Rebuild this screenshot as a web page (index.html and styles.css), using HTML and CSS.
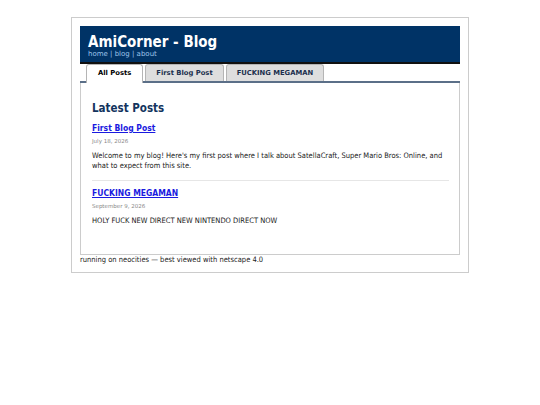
FILE: index.html
```html
<!DOCTYPE html>
<html>
<head>
<meta charset="utf-8">
<title>AmiCorner - Blog</title>
<link rel="stylesheet" href="styles.css">
</head>
<body>
<div class="page">
  <div class="header">
    <h1 class="title">AmiCorner - Blog</h1>
    <div class="nav"><a href="#">home</a> | <a href="#">blog</a> | <a href="#">about</a></div>
  </div>
  <div class="tabs">
    <div class="tab active">All Posts</div>
    <div class="tab">First Blog Post</div>
    <div class="tab">FUCKING MEGAMAN</div>
  </div>
  <div class="panel">
    <h2 class="heading">Latest Posts</h2>
    <div class="post">
      <div class="post-head"><a class="post-title" href="#">First Blog Post</a></div>
      <div class="date">July 18, 2026</div>
      <p class="text">Welcome to my blog! Here's my first post where I talk about SatellaCraft, Super Mario Bros: Online, and what to expect from this site.</p>
    </div>
    <div class="post last">
      <div class="post-head"><a class="post-title" href="#">FUCKING MEGAMAN</a></div>
      <div class="date">September 9, 2026</div>
      <p class="text">HOLY FUCK NEW DIRECT NEW NINTENDO DIRECT NOW</p>
    </div>
  </div>
  <div class="footer">running on neocities — best viewed with netscape 4.0</div>
</div>
</body>
</html>
```

FILE: styles.css
```css
body {
  margin: 17px 0 0;
  background: #fff;
  font-family: "DejaVu Sans", Verdana, sans-serif;
  color: #222;
}
.page {
  width: 380px;
  margin: 0 auto;
  padding: 8px;
  border: 1px solid #ccc;
  background: #fff;
}
.header {
  background: #003366;
  padding: 8px 8px 3px;
  border-bottom: 2px solid #111;
}
.title {
  margin: 0;
  font-family: "DejaVu Sans Condensed", "DejaVu Sans", sans-serif;
  font-size: 15px;
  line-height: 16px;
  color: #fff;
  font-weight: bold;
}
.nav {
  font-size: 7px;
  line-height: 9px;
  color: #9cc3ea;
}
.nav a {
  color: #9cc3ea;
  text-decoration: none;
}
.tabs {
  display: flex;
  gap: 2px;
  padding: 0 0 0 6px;
  border-bottom: 2px solid #5b6f88;
}
.tab {
  font-size: 6.8px;
  font-weight: bold;
  line-height: 9px;
  padding: 4px 10px 3px;
  border: 1px solid #b5b5b5;
  border-bottom: none;
  border-radius: 3px 3px 0 0;
  background: #dedede;
  color: #1b2f4d;
}
.tab.active {
  background: #fff;
  color: #000;
  margin-bottom: -2px;
  padding: 4px 11px 5px;
}
.panel {
  box-sizing: border-box;
  height: 172px;
  border: 1px solid #ccc;
  border-top: none;
  padding: 18px 10px 0 11px;
}
.heading {
  margin: 0 0 7px;
  font-family: "DejaVu Sans Condensed", "DejaVu Sans", sans-serif;
  font-size: 11.5px;
  line-height: 14px;
  color: #13345e;
}
.post {
  padding-bottom: 10px;
  border-bottom: 1px solid #e6e6e6;
  margin-bottom: 6px;
}
.post.last {
  border-bottom: none;
}
.post-head {
  font-family: "DejaVu Sans Condensed", "DejaVu Sans", sans-serif;
  font-size: 8.5px;
  line-height: 12px;
}
.post-title {
  font-weight: bold;
  color: #1a1ae0;
}
.date {
  font-size: 5.5px;
  line-height: 7px;
  color: #888;
  margin: 4px 0 6px;
}
.text {
  margin: 0;
  font-family: "DejaVu Sans Condensed", "DejaVu Sans", sans-serif;
  font-size: 7.5px;
  line-height: 9.5px;
  color: #1a1a1a;
}
.footer {
  font-family: "DejaVu Sans Condensed", "DejaVu Sans", sans-serif;
  font-size: 7.5px;
  line-height: 9px;
  color: #222;
}
```
